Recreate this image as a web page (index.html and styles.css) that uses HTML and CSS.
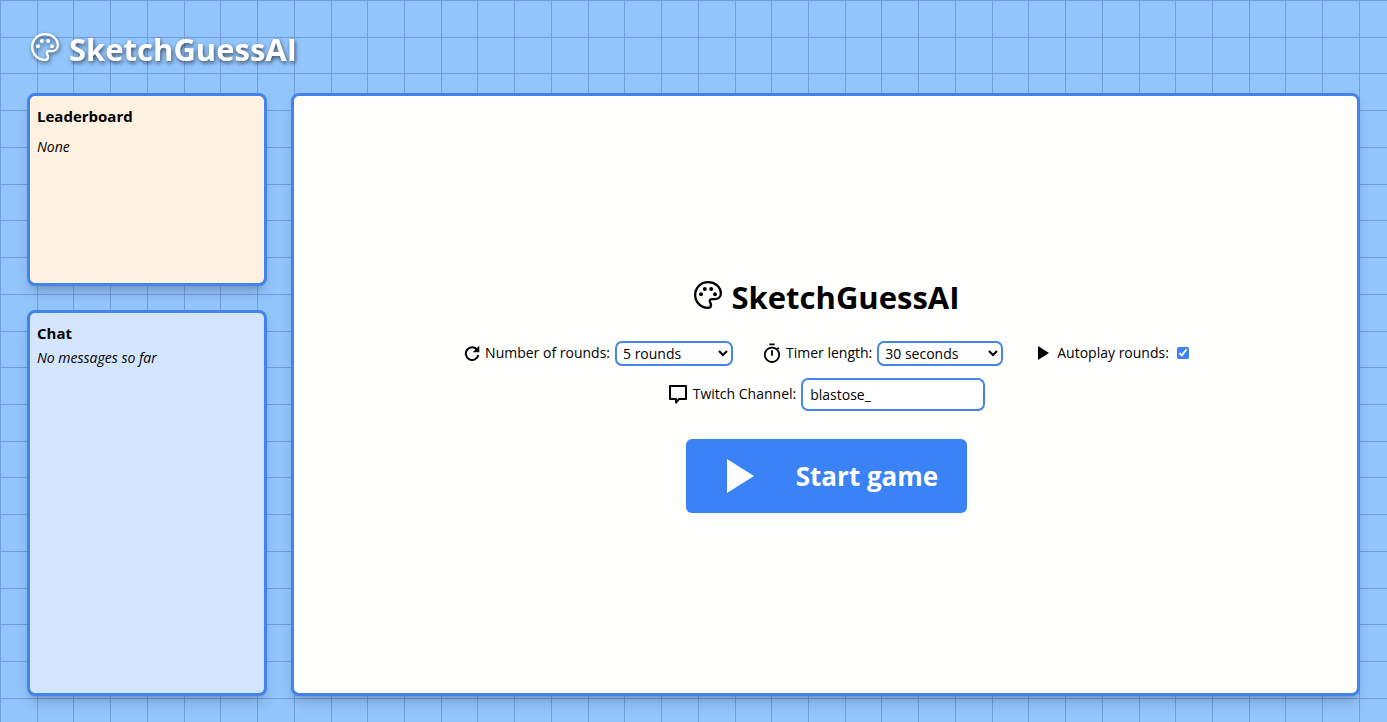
FILE: index.html
```html
<!DOCTYPE html>
<html lang="en">
<head>
<meta charset="utf-8">
<meta name="viewport" content="width=device-width, initial-scale=1">
<title>SketchGuessAI</title>
<link rel="stylesheet" href="styles.css">
</head>
<body>
<svg class="sprite" aria-hidden="true">
  <symbol id="palette" viewBox="0 0 24 24">
    <path fill="none" stroke="currentColor" stroke-width="2" stroke-linejoin="round" d="M12 1C5.900 1 1 5.900 1 12s4.900 11 11 11c1.500 0 2.600-1.100 2.600-2.600 0-.7-.3-1.200-.6-1.700-.3-.4-.5-.8-.5-1.300 0-1.100.8-1.900 1.900-1.900H18c2.900 0 5-2.100 5-4.800C23 5.100 18.100 1 12 1z"/>
    <circle cx="6" cy="11.300" r="1.700" fill="currentColor"/>
    <circle cx="9.300" cy="6.900" r="1.700" fill="currentColor"/>
    <circle cx="14.700" cy="6.900" r="1.700" fill="currentColor"/>
    <circle cx="18" cy="11.300" r="1.700" fill="currentColor"/>
  </symbol>
  <symbol id="play" viewBox="0 0 12 14">
    <path fill="currentColor" d="M1 0v14l11-7z"/>
  </symbol>
</svg>
<div class="page">
  <header class="header">
    <div class="brand"><svg class="brand-icon"><use href="#palette"/></svg><span>SketchGuessAI</span></div>
  </header>
  <div class="layout">
    <aside class="sidebar">
      <section class="card leaderboard">
        <h2>Leaderboard</h2>
        <p>None</p>
      </section>
      <section class="card chat">
        <h2>Chat</h2>
        <p>No messages so far</p>
      </section>
    </aside>
    <main class="card stage">
      <h1 class="title"><svg class="brand-icon"><use href="#palette"/></svg><span>SketchGuessAI</span></h1>
      <form class="settings">
        <div class="row">
          <div class="field">
            <svg class="icon" viewBox="0 0 24 24"><path fill="none" stroke="currentColor" stroke-width="3" d="M20 7.500A9.500 9.500 0 1 0 21.500 15"/><path fill="currentColor" d="M23 1v10H13z"/></svg>
            <label for="rounds">Number of rounds:</label>
            <select id="rounds" class="control rounds"><option>5 rounds</option></select>
          </div>
          <div class="field">
            <svg class="icon timer" viewBox="0 0 20 22"><circle cx="10" cy="13" r="8" fill="none" stroke="currentColor" stroke-width="2"/><path fill="none" stroke="currentColor" stroke-width="2" d="M7 1.500h6M10 8v6M15.500 7l2-2"/></svg>
            <label for="timer">Timer length:</label>
            <select id="timer" class="control seconds"><option>30 seconds</option></select>
          </div>
          <div class="field autoplay">
            <svg class="icon" aria-hidden="true"><use href="#play"/></svg>
            <label for="autoplay">Autoplay rounds:</label>
            <input id="autoplay" class="tick" type="checkbox" checked>
          </div>
        </div>
        <div class="field">
          <svg class="icon bubble" viewBox="0 0 20 20"><path fill="none" stroke="currentColor" stroke-width="2" stroke-linejoin="round" d="M2 2h16v13h-7l-3 3.500V15H2z"/></svg>
          <label for="channel">Twitch Channel:</label>
          <input id="channel" class="control channel" type="text" value="blastose_" spellcheck="false">
        </div>
        <button class="start" type="button"><svg class="start-icon" viewBox="0 0 27 34"><path fill="currentColor" d="M0 0v34l27-17z"/></svg><span>Start game</span></button>
      </form>
    </main>
  </div>
</div>
</body>
</html>
```
FILE: styles.css
```css
* { box-sizing: border-box; }

body {
  margin: 0;
  font-family: "Open Sans", "Noto Sans", sans-serif;
  font-size: 14px;
  line-height: 22px;
  color: #000;
  background:
    repeating-linear-gradient(to right, #739ddf 0 1px, transparent 1px 2.648vw),
    repeating-linear-gradient(to bottom, #739ddf 0 1px, transparent 1px 2.648vw),
    #93c5fd;
}

h1, h2, p { margin: 0; }
svg { flex: none; }
.sprite { position: absolute; width: 0; height: 0; }

.page {
  display: flex;
  flex-direction: column;
  min-height: 100vh;
  padding: 27px 27px 26px;
}

.header { padding: 0 4px; }

.brand, .title {
  display: flex;
  align-items: center;
  gap: 10px;
  font-size: 31px;
  font-weight: 700;
  line-height: 44px;
}

.brand { color: #fff; filter: drop-shadow(1px 2px 2px rgba(0, 0, 0, .6)); }
.brand-icon { width: 28px; height: 28px; margin-bottom: 4px; }

.layout {
  display: flex;
  flex: 1;
  gap: 24px;
  margin-top: 22px;
}

.sidebar {
  display: grid;
  flex: none;
  grid-template-rows: 1fr 2fr;
  gap: 24px;
  width: 240px;
}

.card {
  border: 3px solid #4383ea;
  border-radius: 8px;
  box-shadow: 0 9px 14px -3px rgba(0, 0, 0, .18), 0 4px 6px -4px rgba(0, 0, 0, .14);
}

.leaderboard, .chat { padding: 8px 7px; }
.leaderboard { background: #fff1e0; }
.chat { background: #d4e5ff; }
.card h2 { font-size: 15px; line-height: 24px; }
.card p { font-style: italic; line-height: 26px; }
.leaderboard p { margin-top: 6px; }

.stage {
  display: flex;
  flex: 1;
  flex-direction: column;
  align-items: center;
  justify-content: center;
  gap: 22px;
  padding: 0 0 2px 2px;
  background: #fffffe;
}

.settings {
  display: flex;
  flex-direction: column;
  align-items: center;
  gap: 12px;
}

.row { display: flex; flex-wrap: wrap; justify-content: center; gap: 12px 30px; }
.field { display: flex; align-items: center; gap: 5px; }
.icon { width: 16px; height: 16px; }
.timer { width: 18px; height: 20px; }
.bubble { width: 20px; height: 20px; }
.autoplay { gap: 8px; padding-left: 4px; }
.autoplay .icon { width: 12px; height: 14px; }

.control {
  border: 2px solid #4383ea;
  border-radius: 7px;
  background: #fff;
  color: #000;
  font: inherit;
}

select.control { height: 25px; padding: 0 2px; }
.rounds { width: 118px; }
.seconds { width: 126px; }
.channel { width: 184px; height: 33px; padding: 0 7px; }
.tick { width: 12px; height: 12px; margin: 0; accent-color: #3b82f6; }

.start {
  display: flex;
  align-items: center;
  gap: 42px;
  margin-top: 16px;
  padding: 17px 29px 17px 41px;
  border: 0;
  border-radius: 6px;
  background: #3b82f6;
  color: #fff;
  font: inherit;
  font-size: 26px;
  font-weight: 700;
  line-height: 40px;
}

.start-icon { width: 27px; height: 34px; }
```
